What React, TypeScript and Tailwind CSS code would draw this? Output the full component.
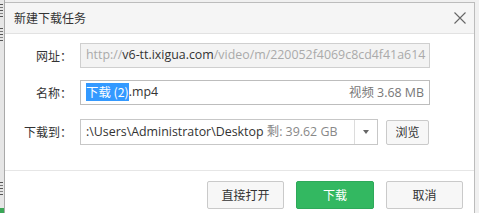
import React from "react";

const cjk = { fontFamily: '"Noto Sans CJK SC", "Noto Sans", sans-serif' };
const latin = { fontFamily: '"Open Sans", "Noto Sans CJK SC", sans-serif' };

function Label({ children }: { children: React.ReactNode }) {
  return (
    <div className="w-[67px] shrink-0 text-right text-[12px] text-[#333]" style={cjk}>
      {children}
    </div>
  );
}

function Button({
  children,
  primary,
}: {
  children: React.ReactNode;
  primary?: boolean;
}) {
  return (
    <button
      type="button"
      className={
        primary
          ? "flex h-[28px] w-[78px] items-center justify-center rounded-[2px] border border-[#2ea95a] bg-[#33b861] text-[12px] text-white"
          : "flex h-[28px] w-[77px] items-center justify-center rounded-[2px] border border-[#cacaca] bg-[#f7f7f7] text-[12px] text-[#333]"
      }
      style={cjk}
    >
      {children}
    </button>
  );
}

// sliver of the window behind the dialog
function Glyph({ top }: { top: string }) {
  return (
    <div className={`${top} flex w-[3px] flex-col gap-[2px]`}>
      <div className="h-[1px] bg-[#555]" />
      <div className="h-[1px] bg-[#777]" />
      <div className="h-[1px] bg-[#555]" />
      <div className="h-[1px] bg-[#888]" />
      <div className="h-[1px] bg-[#555]" />
    </div>
  );
}

export default function App() {
  return (
    <div className="flex h-[213px] w-[479px] overflow-hidden bg-[#f0f0f0]">
      <div className="flex w-[5px] shrink-0 flex-col border-r border-[#a9a9a9] bg-[#e6e6e6]">
        <Glyph top="mt-[4px]" />
        <Glyph top="mt-[11px]" />
        <Glyph top="mt-[141px]" />
        <div className="mt-auto h-[5px] bg-[#3aa757]" />
      </div>

      <div className="mt-[2px] flex w-[470px] shrink-0 flex-col border-t border-r border-[#bcbcbc] bg-white">
        {/* title bar */}
        <div className="flex h-[31px] shrink-0 items-center justify-between border-b border-[#e2e2e2] bg-[#f5f5f5] pl-[9px] pr-[7px]">
          <span className="text-[12px] text-[#333]" style={cjk}>
            新建下载任务
          </span>
          <svg width="14" height="14" viewBox="0 0 14 14" className="text-[#666]">
            <path d="M1.5 1.5 L12.5 12.5 M12.5 1.5 L1.5 12.5" stroke="currentColor" strokeWidth="1.1" fill="none" />
          </svg>
        </div>

        <div className="flex flex-col pt-[9px]">
          {/* url */}
          <div className="flex items-center">
            <Label>网址：</Label>
            <div
              className="ml-[8px] flex h-[25px] w-[350px] items-center overflow-hidden whitespace-nowrap border border-[#cfcfcf] bg-[#f3f3f3] pl-[5px] text-[12.4px] text-[#aaa]"
              style={latin}
            >
              http://<span className="text-[#333]">v6-tt.ixigua.com</span>/video/m/220052f4069c8cd4f41a614
            </div>
          </div>

          {/* name */}
          <div className="mt-[12px] flex items-center">
            <Label>名称：</Label>
            <div
              className="ml-[8px] flex h-[25px] w-[350px] items-center justify-between whitespace-nowrap border border-[#bdbdbd] bg-white pl-[5px] pr-[5px] text-[12.4px] text-[#333]"
              style={latin}
            >
              <span className="flex items-center">
                <span className="inline-block h-[18px] bg-[#3399ff] leading-[18px] text-white" style={cjk}>
                  下载 (2)
                </span>
                .mp4
              </span>
              <span className="text-[#777]">
                <span style={cjk}>视频</span> 3.68 MB
              </span>
            </div>
          </div>

          {/* path */}
          <div className="mt-[14px] flex items-center">
            <Label>下载到：</Label>
            <div className="ml-[8px] flex h-[26px] w-[298px] items-center border border-[#c7c7c7] bg-white text-[12.4px]" style={latin}>
              <div className="flex-1 overflow-hidden whitespace-nowrap pl-[5px] text-[#333]">
                :\Users\Administrator\Desktop{" "}
                <span className="text-[#888]">
                  <span style={cjk}>剩</span>: 39.62 GB
                </span>
              </div>
              <div className="flex h-full w-[23px] items-center justify-center border-l border-[#dcdcdc]">
                <svg width="6" height="4" viewBox="0 0 6 4">
                  <path d="M0 0 L6 0 L3 4 Z" fill="#666" />
                </svg>
              </div>
            </div>
            <div
              className="ml-[8px] flex h-[25px] w-[43px] items-center justify-center rounded-[2px] border border-[#cacaca] bg-[#f7f7f7] text-[12px] text-[#333]"
              style={cjk}
            >
              浏览
            </div>
          </div>

          <div className="mt-[25px] border-t border-[#e6e6e6]" />

          {/* actions */}
          <div className="flex justify-end gap-[12px] pr-[11px] pt-[10px]">
            <Button>直接打开</Button>
            <Button primary>下载</Button>
            <Button>取消</Button>
          </div>
        </div>
      </div>
    </div>
  );
}
